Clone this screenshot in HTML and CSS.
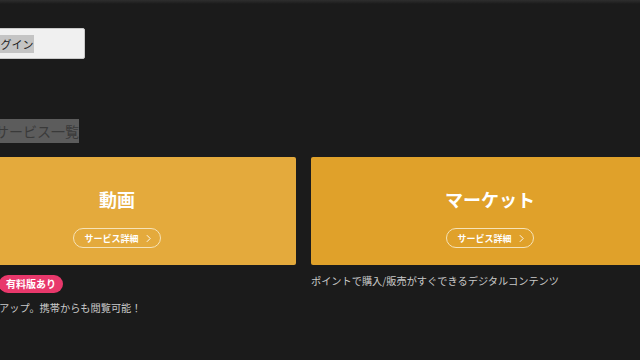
FILE: index.html
```html
<!DOCTYPE html>
<html lang="ja">
<head>
    <meta charset="UTF-8">
    <meta name="viewport" content="width=device-width, initial-scale=1.0">
    <title>サービス一覧</title>
    <link rel="stylesheet" href="styles.css">
</head>
<body>
    <div class="topbar"></div>

    <div class="page">
        <div class="header">
            <button class="login"><span class="selected">ログイン</span></button>
        </div>

        <h2 class="section-title"><span class="selected-dark">サービス一覧</span></h2>

        <div class="services">
            <div class="service">
                <div class="card card-video">
                    <h3 class="card-title">動画</h3>
                    <a class="detail" href="#">サービス詳細
                        <svg class="chev" viewBox="0 0 6 10" width="5" height="9"><path d="M1 1l4 4-4 4" fill="none" stroke="#fff" stroke-width="1.1"/></svg>
                    </a>
                </div>
                <div class="tags">
                    <span class="tag tag-free">無料会員</span>
                    <span class="tag">有料版あり</span>
                </div>
                <p class="desc">人気の動画をアップ。携帯からも閲覧可能！</p>
            </div>

            <div class="service">
                <div class="card card-market">
                    <h3 class="card-title">マーケット</h3>
                    <a class="detail" href="#">サービス詳細
                        <svg class="chev" viewBox="0 0 6 10" width="5" height="9"><path d="M1 1l4 4-4 4" fill="none" stroke="#fff" stroke-width="1.1"/></svg>
                    </a>
                </div>
                <p class="desc">ポイントで購入/販売がすぐできるデジタルコンテンツ</p>
            </div>
        </div>
    </div>
</body>
</html>
```

FILE: styles.css
```css
* {
    box-sizing: border-box;
    margin: 0;
    padding: 0;
    font-family: "Noto Sans CJK JP", "Noto Sans", sans-serif;
}

body {
    background-color: #1b1b1b;
    overflow: hidden;
    width: 640px;
    height: 360px;
}

.topbar {
    height: 4px;
    background: linear-gradient(#2e2e2e, #1b1b1b);
}

/* page is scrolled sideways, left edge is off screen */
.page {
    margin-left: -62px;
    width: 731px;
}

.header {
    padding-top: 24px;
}

.login {
    width: 147px;
    height: 31px;
    background-color: #f0f0f0;
    border: 1px solid #c9c9c9;
    border-radius: 2px;
    font-size: 11px;
    color: #222;
    cursor: pointer;
}

.selected {
    background-color: #c4c4c4;
    padding: 1px 0;
}

.section-title {
    margin: 62px 0 0 57px;
    font-size: 14px;
    font-weight: 400;
    line-height: 21px;
    color: #3a3a3a;
}

.selected-dark {
    background-color: #5c5c5c;
    padding: 2px 0;
}

.services {
    display: grid;
    grid-template-columns: 1fr 1fr;
    gap: 15px;
    margin-top: 15px;
}

.card {
    height: 108px;
    border-radius: 2px;
    display: flex;
    flex-direction: column;
    align-items: center;
    gap: 18px;
    padding-top: 31px;
}

.card-video {
    background-color: #e4aa3c;
}

.card-market {
    background-color: #e0a12a;
}

.card-title {
    font-size: 18px;
    font-weight: 700;
    color: #fff;
    line-height: 22px;
}

.detail {
    display: flex;
    align-items: center;
    gap: 7px;
    height: 20px;
    padding: 0 9px 0 10px;
    border: 1px solid #f6e3b8;
    border-radius: 10px;
    font-size: 9px;
    font-weight: 700;
    color: #fff;
    text-decoration: none;
}

.tags {
    display: flex;
    gap: 4px;
    margin-top: 10px;
}

.tag {
    display: inline-block;
    height: 18px;
    line-height: 18px;
    padding: 0 7px;
    border-radius: 9px;
    background-color: #e8386b;
    color: #fff;
    font-size: 10px;
    font-weight: 700;
}

.tag-free {
    width: 57px;
    background-color: #3a8fd8;
}

.desc {
    margin-top: 8px;
    font-size: 10.2px;
    color: #c9c9c9;
    line-height: 14px;
}

.card-market + .desc {
    margin-top: 9px;
}
```
